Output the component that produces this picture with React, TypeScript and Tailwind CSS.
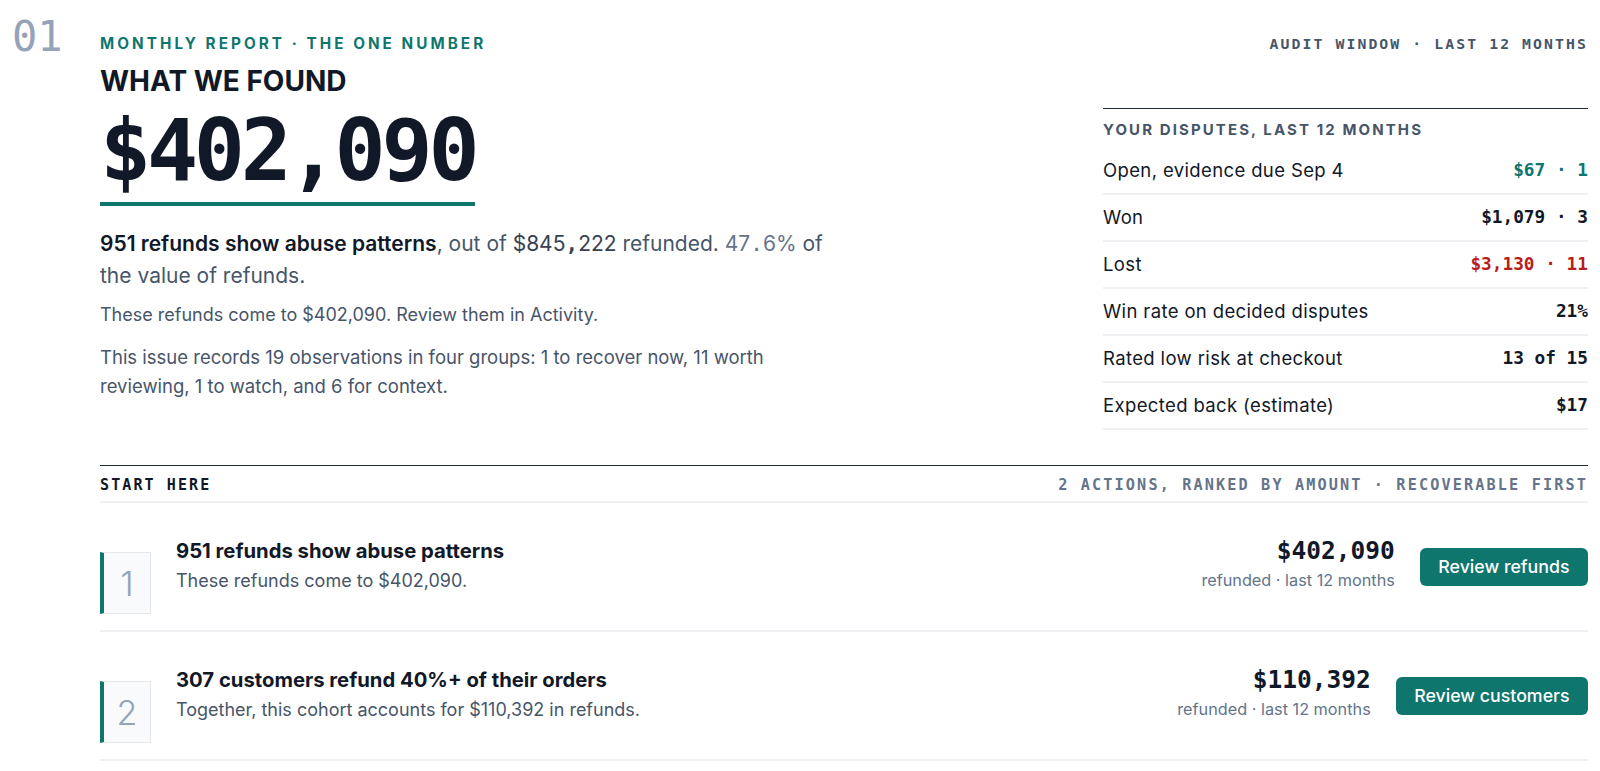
const sans = "font-['Inter','Noto_Sans',sans-serif]";
const mono = "font-['DejaVu_Sans_Mono','Liberation_Mono',monospace]";

type Dispute = { label: string; value: string; tone: string };

const disputes: Dispute[] = [
  { label: "Open, evidence due Sep 4", value: "$67 · 1", tone: "text-[#0f766e]" },
  { label: "Won", value: "$1,079 · 3", tone: "text-[#111827]" },
  { label: "Lost", value: "$3,130 · 11", tone: "text-[#b91c1c]" },
  { label: "Win rate on decided disputes", value: "21%", tone: "text-[#111827]" },
  { label: "Rated low risk at checkout", value: "13 of 15", tone: "text-[#111827]" },
  { label: "Expected back (estimate)", value: "$17", tone: "text-[#111827]" },
];

type Action = { n: number; title: string; sub: string; amount: string; cta: string };

const actions: Action[] = [
  {
    n: 1,
    title: "951 refunds show abuse patterns",
    sub: "These refunds come to $402,090.",
    amount: "$402,090",
    cta: "Review refunds",
  },
  {
    n: 2,
    title: "307 customers refund 40%+ of their orders",
    sub: "Together, this cohort accounts for $110,392 in refunds.",
    amount: "$110,392",
    cta: "Review customers",
  },
];

function DisputesPanel() {
  return (
    <aside className="mt-[54px] w-[485px] shrink-0 border-t-[1.5px] border-[#1f2937]">
      <div className={`${sans} pt-[13px] pb-[10px] text-[15px] leading-4 font-bold tracking-[0.14em] text-[#475569]`}>
        YOUR DISPUTES, LAST 12 MONTHS
      </div>
      {disputes.map((d) => (
        <div
          key={d.label}
          className="flex h-[47px] items-center justify-between border-b-2 border-[#eef0f3]"
        >
          <span className={`${sans} text-[18.5px] tracking-[0.02em] text-[#111827]`}>{d.label}</span>
          <span className={`${mono} text-[17.75px] font-bold ${d.tone}`}>{d.value}</span>
        </div>
      ))}
    </aside>
  );
}

function ActionRow({ a }: { a: Action }) {
  return (
    <div className="flex items-start border-b-2 border-[#eef0f3] pt-[34px] pb-[16px]">
      <div className="mt-[15px] flex h-[62px] w-[51px] shrink-0 items-center justify-center border border-l-4 border-[#e5e7eb] border-l-[#0f766e] bg-[#f8fafc]">
        <span className={`${sans} text-[34px] font-light text-[#94a3b8]`}>{a.n}</span>
      </div>
      <div className="ml-[25px] flex-1">
        <div className={`${sans} text-[20.25px] leading-7 font-bold text-[#111827]`}>{a.title}</div>
        <div className={`${sans} mt-[2px] text-[18px] leading-7 text-[#475569]`}>{a.sub}</div>
      </div>
      <div className="flex items-start gap-[25px]">
        <div className="text-right">
          <div className={`${mono} text-[24.5px] leading-7 font-bold text-[#111827]`}>{a.amount}</div>
          <div className={`${sans} mt-[5px] text-[16.25px] leading-5 text-[#64748b]`}>refunded · last 12 months</div>
        </div>
        <button
          className={`${sans} mt-[11px] h-[38px] rounded-md bg-[#0f766e] px-[18.5px] text-[17.75px] font-medium text-white`}
        >
          {a.cta}
        </button>
      </div>
    </div>
  );
}

export default function App() {
  return (
    <div className="flex overflow-hidden bg-white pt-[34px]">
      <div className="w-[100px] shrink-0 pl-3">
        <div className={`${mono} -mt-[18.5px] text-[42px] leading-[42px] text-[#94a3b8]`}>01</div>
      </div>

      <div className="min-w-0 flex-1 pr-[12px]">
        <div className="flex items-center justify-between">
          <div className={`${sans} text-[15.25px] leading-5 font-bold tracking-[0.2em] text-[#0f766e]`}>
            MONTHLY REPORT · THE ONE NUMBER
          </div>
          <div className={`${mono} text-[14.8px] leading-5 font-bold tracking-[0.14em] text-[#475569]`}>
            AUDIT WINDOW · LAST 12 MONTHS
          </div>
        </div>

        <div className="flex justify-between">
          <div className="pt-[9px]">
            <h1 className={`${sans} text-[28px] leading-9 font-bold text-[#111827]`}>WHAT WE FOUND</h1>
            <div
              className={`${mono} mt-[7px] inline-block border-b-4 border-[#0f766e] pb-[6px] text-[85px] leading-[90px] font-bold tracking-tighter text-[#111827]`}
            >
              $402,090
            </div>

            <p className={`${sans} mt-[22px] max-w-[740px] text-[21px] leading-[31px] text-[#475569]`}>
              <span className="font-semibold text-[#111827]">951 refunds show abuse patterns</span>
              <span>, out of </span>
              <span className="text-[#374151]">$845</span>
              <span className={`${mono} font-bold text-[#374151]`}>,</span>
              <span className="text-[#374151]">222</span>
              <span> refunded. </span>
              <span className="text-[#64748b]">47</span>
              <span className={`${mono} text-[#64748b]`}>.</span>
              <span className="text-[#64748b]">6%</span>
              <span> of</span> <span>the value of refunds.</span>
            </p>
            <p className={`${sans} mt-[10px] text-[18px] leading-7 text-[#475569]`}>
              These refunds come to $402,090. Review them in Activity.
            </p>
            <p className={`${sans} mt-[14px] max-w-[700px] text-[18.5px] leading-[29px] text-[#475569]`}>
              This issue records 19 observations in four groups: 1 to recover now, 11 worth reviewing, 1 to
              watch, and 6 for context.
            </p>
          </div>

          <DisputesPanel />
        </div>

        <section className="mt-[35px]">
          <div className="flex h-[38px] items-center justify-between border-t-[1.5px] border-b-2 border-t-[#1f2937] border-b-[#eef0f3] pt-[4px]">
            <span className={`${mono} text-[15px] font-bold tracking-[0.14em] text-[#111827]`}>START HERE</span>
            <span className={`${mono} text-[15.2px] font-bold tracking-[0.14em] text-[#64748b]`}>
              2 ACTIONS, RANKED BY AMOUNT · RECOVERABLE FIRST
            </span>
          </div>
          {actions.map((a) => (
            <ActionRow key={a.n} a={a} />
          ))}
        </section>
      </div>
    </div>
  );
}
